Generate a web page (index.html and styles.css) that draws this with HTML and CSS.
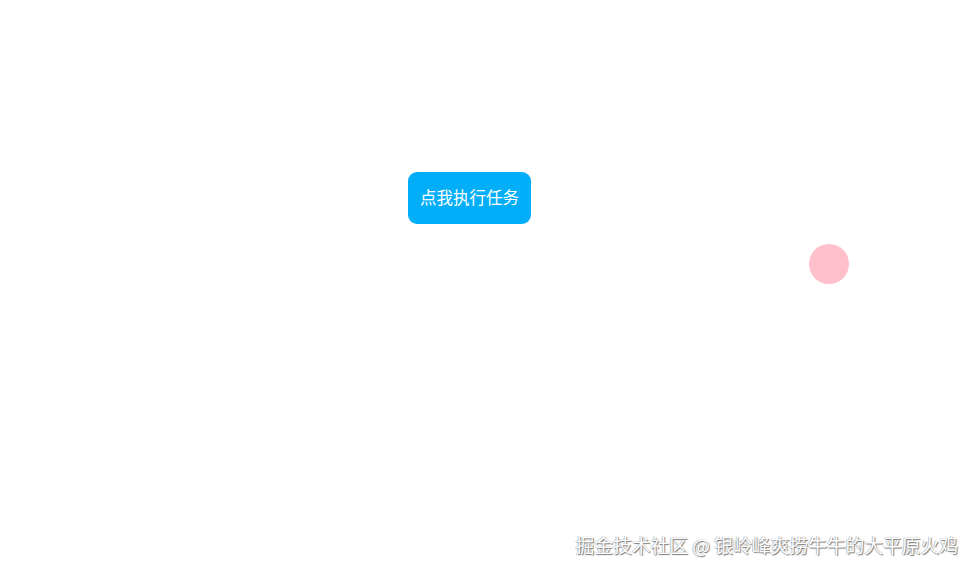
FILE: index.html
```html
<!DOCTYPE html>
<html lang="zh">
<head>
<meta charset="utf-8">
<link rel="stylesheet" href="styles.css">
</head>
<body>
<main class="stage">
  <button class="task-btn">点我执行任务</button>
  <div class="ball"></div>
</main>
<div class="watermark">掘金技术社区 @ 银岭峰爽捞牛牛的大平原火鸡</div>
</body>
</html>
```
FILE: styles.css
```css
html, body {
  margin: 0;
  padding: 0;
  width: 974px;
  height: 572px;
  background: #fff;
  overflow: hidden;
  font-family: "Noto Sans CJK SC", "Liberation Sans", sans-serif;
}
.stage {
  position: relative;
  width: 974px;
  height: 572px;
  padding: 172px 0 0 408px;
  box-sizing: border-box;
}
.task-btn {
  display: block;
  width: 123px;
  height: 52px;
  border: none;
  border-radius: 9px;
  background: #03aef8;
  color: #fff;
  font-family: "Noto Sans CJK SC", sans-serif;
  font-weight: 400;
  font-size: 16.5px;
  line-height: 50px;
  padding: 0 0 2px;
}
.ball {
  position: absolute;
  left: 808.5px;
  top: 243.5px;
  width: 40px;
  height: 40px;
  border-radius: 50%;
  background: #ffc0cb;
}
.watermark {
  position: absolute;
  right: 16px;
  top: 532px;
  font-size: 18.75px;
  line-height: 26px;
  color: #fff;
  text-shadow: 1px 1px 1px #777, -0.5px 0 1px #999;
  white-space: nowrap;
}
```
